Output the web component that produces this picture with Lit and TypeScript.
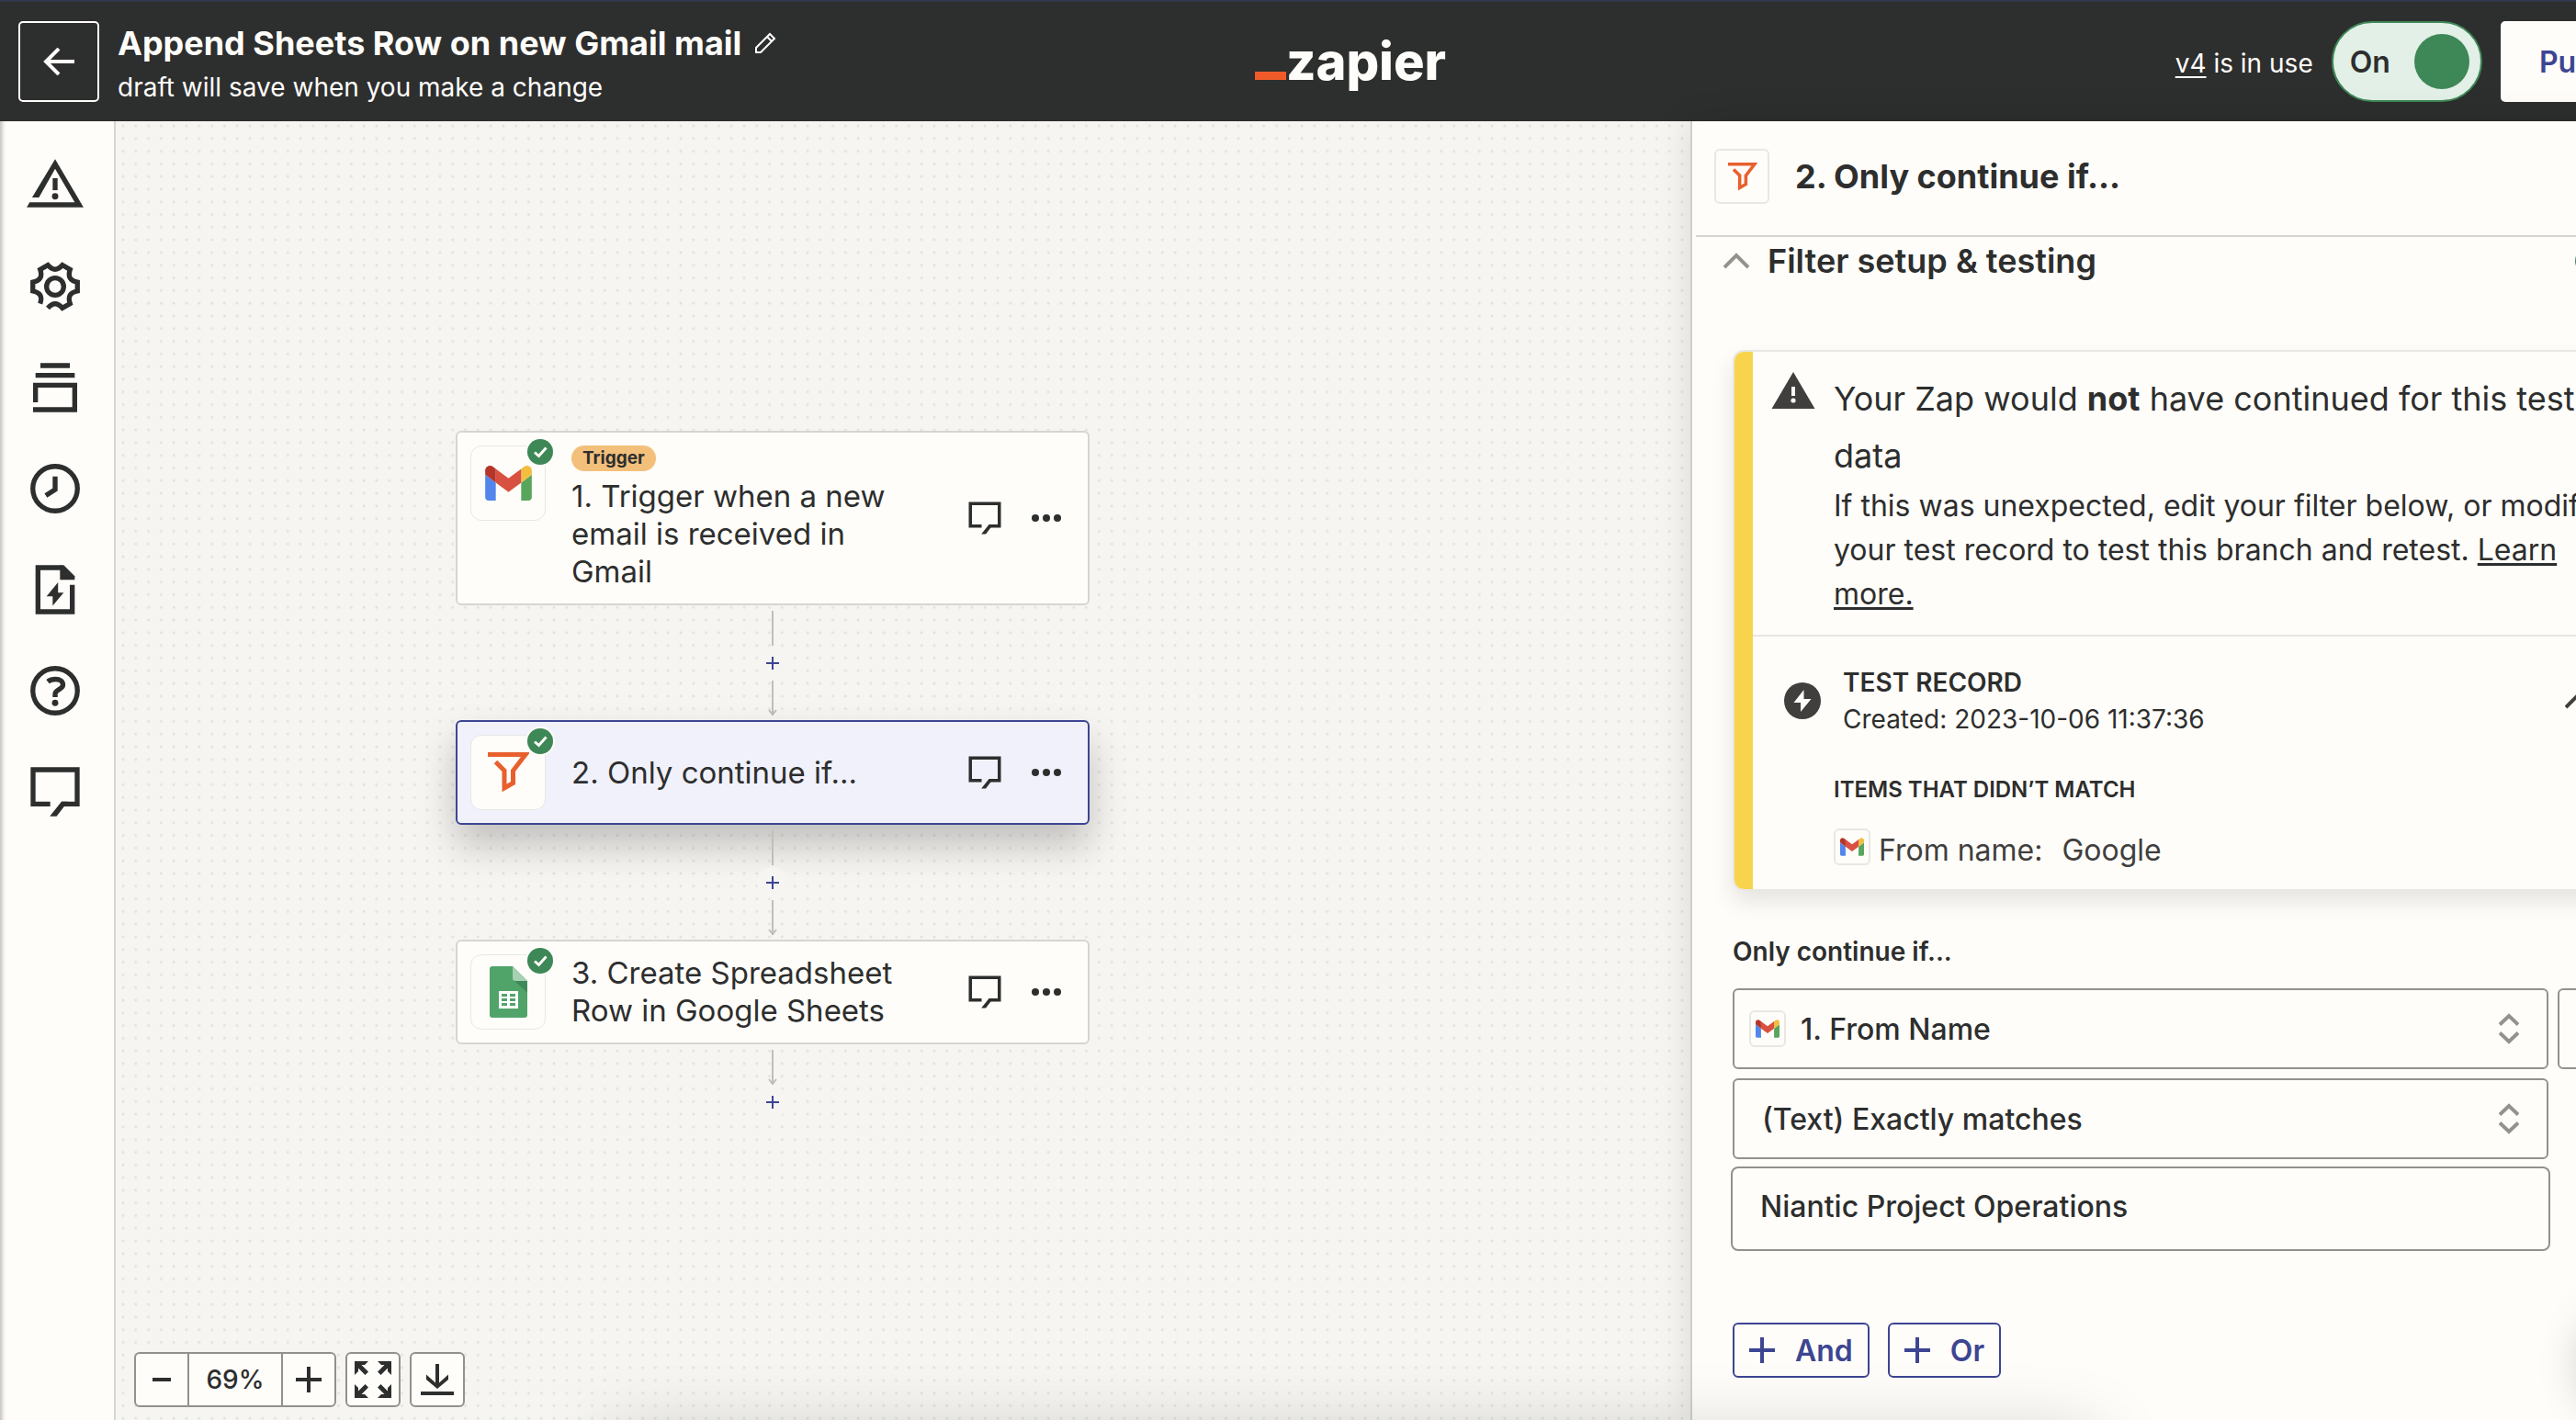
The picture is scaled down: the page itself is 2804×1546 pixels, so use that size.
import { LitElement, html, css, svg, nothing } from "lit";
import { customElement, property } from "lit/decorators.js";

/* ---------- icons ---------- */

const funnelIcon = html`<svg class="funnel" viewBox="0 0 46 44" fill="none" stroke="#e8602e" stroke-width="5" aria-hidden="true">
  <path d="M1 2.500H42L28.500 20V33.500L19 39V20L9.500 10.500" />
</svg>`;

const gmailIcon = html`<svg class="gmail" viewBox="52 42 88 66" aria-hidden="true">
  <path fill="#5386ec" d="M58 108h14V74L52 59v43c0 3.32 2.69 6 6 6" />
  <path fill="#58a55c" d="M120 108h14c3.32 0 6-2.69 6-6V59l-20 15" />
  <path fill="#f2be42" d="M120 48v26l20-15v-8c0-7.42-8.47-11.65-14.4-7.2" />
  <path fill="#d8503f" d="M72 74V48l24 18 24-18v26L96 92" />
  <path fill="#b5352a" d="M52 51v8l20 15V48l-5.6-4.2c-5.94-4.45-14.4-.22-14.4 7.2" />
</svg>`;

const sheetsIcon = html`<svg class="sheets" viewBox="0 0 41 56" aria-hidden="true">
  <path fill="#50a46a" d="M3 0H25L41 16V53a3 3 0 0 1-3 3H3a3 3 0 0 1-3-3V3a3 3 0 0 1 3-3z" />
  <path fill="#3f8a58" d="M26 15L41 29V16z" />
  <path fill="#a6d1b3" d="M25 0L41 16H28a3 3 0 0 1-3-3z" />
  <path fill="#fff" d="M10 27H31V46H10z" />
  <path fill="#50a46a" d="M13 30h6v3h-6zM22 30h6v3h-6zM13 35h6v3h-6zM22 35h6v3h-6zM13 40h6v3h-6zM22 40h6v3h-6z" />
</svg>`;

const checkIcon = html`<svg viewBox="0 0 28 28" width="28" height="28" aria-hidden="true">
  <circle cx="14" cy="14" r="14" fill="#3e8756" />
  <path d="M8 14.5L12.5 18.5L20.5 9.5" fill="none" stroke="#fffdf9" stroke-width="3" />
</svg>`;

/* Six-toothed gear outline, left open at the lower-left tooth. */
const gearPath = (() => {
  const at = (deg: number, r: number, w: number) => {
    const a = (deg * Math.PI) / 180;
    const x = 12 + r * Math.cos(a) - w * Math.sin(a);
    const y = 12 + r * Math.sin(a) + w * Math.cos(a);
    return `${x.toFixed(2)} ${y.toFixed(2)}`;
  };
  let d = `M${at(120, 9.1, 1.8)}`;
  for (let i = 1; i <= 6; i++) {
    const deg = 120 + i * 60;
    d += `Q${at(deg - 30, 5.3, 0)} ${at(deg, 9.1, -1.8)}`;
    if (i < 6) d += `L${at(deg, 9.1, 1.8)}`;
  }
  return d;
})();

const chatShape = svg`<path d="M10 17H3V3H21V17H14.6" /><path class="solid" d="M14.6 16H17.2L12.6 22H9.8z" />`;

const railIcons = [
  {
    name: "Zap status",
    shape: svg`<path class="solid" d="M12 1.2L23.6 20.9H.4L1.6 18.8H20L12 5.2L5.4 16.9H2.6z" /><path d="M12 9V13.9" /><circle class="solid" cx="12" cy="16.4" r="1.3" />`,
  },
  { name: "Settings", shape: svg`<path d=${gearPath} /><circle cx="12" cy="12" r="3.5" />` },
  { name: "Versions", shape: svg`<path d="M6 3H18M4 7H20M4 18V11H20V21H3" />` },
  { name: "History", shape: svg`<circle cx="12" cy="12" r="9.1" /><path d="M12 7V12.4L8.2 14.8" />` },
  {
    name: "Zap runs",
    shape: svg`<path d="M19 10V21H5V3H14.5" /><path class="solid" d="M14 2H15.5L20 6.5V8H14z" /><path class="solid" d="M13.2 9L8.5 14.7H11V18.6L15.5 13.2H13.2z" />`,
  },
  {
    name: "Help",
    shape: svg`<circle cx="12" cy="12" r="9.1" /><path d="M9 8.3C10 7.5 11 7.3 12.2 7.3C14 7.3 15.2 8.2 15.2 9.6C15.2 11.6 12 11.4 12 13.4V14.6" /><circle class="solid" cx="12" cy="17" r="1.3" />`,
  },
  { name: "Comments", shape: chatShape },
];

/* ---------- shared styles ---------- */

const base = css`
  * {
    box-sizing: border-box;
  }
  :host {
    font-family: Inter, "Liberation Sans", sans-serif;
    color: #2d2e2e;
  }
  button,
  select,
  input {
    font: inherit;
    color: inherit;
    margin: 0;
    padding: 0;
    border: 0;
    background: none;
  }
  button {
    cursor: pointer;
  }
  h1,
  h2,
  h3,
  h4,
  p {
    margin: 0;
  }
  svg {
    display: block;
    flex: none;
  }
  .line {
    fill: none;
    stroke: currentColor;
    stroke-width: 2;
  }
  .line .solid {
    fill: currentColor;
    stroke: none;
  }
`;

/* ---------- top bar ---------- */

@customElement("zap-header")
class ZapHeader extends LitElement {
  static styles = [
    base,
    css`
      :host {
        display: grid;
        grid-template-columns: 1fr auto 1fr;
        align-items: center;
        height: 132px;
        padding: 0 20px;
        border-top: 2px solid #31364a;
        background: #2d2e2e;
        color: #fffdf9;
      }
      .start,
      .end,
      .title-row,
      .toggle {
        display: flex;
        align-items: center;
      }
      .start {
        gap: 20px;
      }
      .end {
        justify-content: flex-end;
        gap: 20px;
      }
      .back {
        display: grid;
        place-items: center;
        width: 88px;
        height: 88px;
        border: 2px solid #fffdf9;
        border-radius: 5px;
      }
      .names {
        display: grid;
        gap: 8px;
        padding-top: 4px;
      }
      .title-row {
        gap: 14px;
      }
      h1 {
        font-size: 36px;
        line-height: 44px;
        font-weight: 700;
      }
      .note {
        font-size: 28px;
        line-height: 36px;
      }
      .logo {
        display: flex;
        align-items: baseline;
        font-size: 56px;
        line-height: 56px;
        font-weight: 800;
        color: #fffdf9;
        text-decoration: none;
      }
      .bar {
        width: 34px;
        height: 9px;
        background: #f05a28;
      }
      .version {
        font-size: 28px;
        line-height: 36px;
        padding-top: 4px;
      }
      .version a {
        color: inherit;
        text-decoration-thickness: 2px;
        text-underline-offset: 4px;
      }
      .toggle {
        justify-content: space-between;
        gap: 26px;
        height: 88px;
        padding: 0 12px 0 18px;
        border: 2px solid #3e8756;
        border-radius: 44px;
        background: #e2f0e8;
        color: #2d2e2e;
        font-size: 32px;
        font-weight: 600;
      }
      .toggle input {
        appearance: none;
        width: 60px;
        height: 60px;
        border-radius: 50%;
        background: #3e8756;
      }
      .publish {
        height: 88px;
        padding: 0 42px;
        border-radius: 5px;
        background: #fffdf9;
        color: #3d4592;
        font-size: 32px;
        font-weight: 600;
      }
    `,
  ];

  render() {
    return html`
      <div class="start">
        <button class="back" aria-label="Back">
          <svg width="34" height="30" viewBox="0 0 34 30" fill="none" stroke="currentColor" stroke-width="4" aria-hidden="true">
            <path d="M34 15H3M17 1L3 15L17 29" />
          </svg>
        </button>
        <div class="names">
          <div class="title-row">
            <h1>Append Sheets Row on new Gmail mail</h1>
            <button aria-label="Rename">
              <svg width="24" height="24" viewBox="0 0 24 24" fill="none" stroke="currentColor" stroke-width="2" aria-hidden="true">
                <path d="M2 22V17L17 2L22 7L7 22zM14 5L19 10" />
              </svg>
            </button>
          </div>
          <p class="note">draft will save when you make a change</p>
        </div>
      </div>
      <a class="logo" href="#"><span class="bar"></span>zapier</a>
      <div class="end">
        <p class="version"><a href="#">v4</a> is in use</p>
        <label class="toggle">On<input type="checkbox" role="switch" checked /></label>
        <button class="publish">Publish</button>
      </div>
    `;
  }
}

/* ---------- left rail ---------- */

@customElement("zap-rail")
class ZapRail extends LitElement {
  static styles = [
    base,
    css`
      :host {
        display: block;
        flex: none;
        padding: 38px 32px 38px 28px;
        border-right: 2px solid #d7d5d2;
        background: #fffdf9;
        box-shadow: inset 6px 0 5px -4px #b9b7b3;
      }
      nav {
        display: grid;
        gap: 46px;
      }
    `,
  ];

  render() {
    return html`<nav>
      ${railIcons.map(
        (icon) => html`<button aria-label=${icon.name}>
          <svg class="line" width="64" height="64" viewBox="0 0 24 24" aria-hidden="true">${icon.shape}</svg>
        </button>`
      )}
    </nav>`;
  }
}

/* ---------- flow canvas ---------- */

interface Step {
  title: string;
  icon: unknown;
  trigger?: boolean;
  selected?: boolean;
}

const steps: Step[] = [
  { title: "1. Trigger when a new email is received in Gmail", icon: gmailIcon, trigger: true },
  { title: "2. Only continue if...", icon: funnelIcon, selected: true },
  { title: "3. Create Spreadsheet Row in Google Sheets", icon: sheetsIcon },
];

@customElement("zap-step")
class ZapStep extends LitElement {
  @property({ attribute: false }) step!: Step;

  static styles = [
    base,
    css`
      :host {
        display: block;
      }
      .card {
        display: flex;
        align-items: center;
        padding: 14px 28px 14px 14px;
        border: 2px solid #d7d5d2;
        border-radius: 6px;
        background: #fffdf9;
      }
      .selected {
        border-color: #3d4592;
        background: #f0f1fa;
        box-shadow: 0 22px 40px rgba(0, 0, 0, 0.22);
      }
      .app {
        position: relative;
        display: grid;
        place-items: center;
        align-self: flex-start;
        flex: none;
        width: 82px;
        height: 82px;
        border: 1px solid #e8e7e4;
        border-radius: 12px;
        background: #fffdf9;
      }
      .check {
        position: absolute;
        top: -8px;
        right: -9px;
        border-radius: 50%;
        box-shadow: 0 0 0 2px #fffdf9;
      }
      .gmail {
        width: 51px;
        height: 38px;
      }
      .funnel {
        width: 46px;
        height: 44px;
      }
      .sheets {
        width: 41px;
        height: 56px;
      }
      .text {
        flex: 1;
        padding: 0 60px 0 28px;
      }
      .tag {
        display: block;
        width: fit-content;
        margin-bottom: 7px;
        padding: 0 12px;
        border-radius: 14px;
        background: #f3c07b;
        font-size: 19px;
        line-height: 28px;
        font-weight: 700;
      }
      h3 {
        font-size: 33px;
        line-height: 41px;
        font-weight: 400;
      }
      .actions {
        display: flex;
        align-items: center;
        gap: 29px;
      }
    `,
  ];

  render() {
    const { title, icon, trigger, selected } = this.step;
    return html`<article class="card ${selected ? "selected" : ""}">
      <div class="app">
        ${icon}
        <span class="check">${checkIcon}</span>
      </div>
      <div class="text">
        ${trigger ? html`<span class="tag">Trigger</span>` : nothing}
        <h3>${title}</h3>
      </div>
      <div class="actions">
        <button aria-label="Comment">
          <svg class="line" width="42" height="42" viewBox="0 0 24 24" aria-hidden="true">${chatShape}</svg>
        </button>
        <button aria-label="More">
          <svg width="34" height="10" viewBox="0 0 34 10" fill="currentColor" aria-hidden="true">
            <circle cx="5" cy="5" r="4" /><circle cx="17" cy="5" r="4" /><circle cx="29" cy="5" r="4" />
          </svg>
        </button>
      </div>
    </article>`;
  }
}

@customElement("zap-canvas")
class ZapCanvas extends LitElement {
  static styles = [
    base,
    css`
      :host {
        --zoom: 0.69;
        position: relative;
        display: block;
        flex: 1;
        min-width: 0;
        padding: 337px 0 0 370px;
        background: #f6f5f2 radial-gradient(circle at 8px 5px, #e4e2de 1px, transparent 2px);
        background-size: calc(20px * var(--zoom)) calc(20px * var(--zoom));
      }
      .flow {
        display: grid;
        width: 690px;
      }
      .link {
        display: flex;
        flex-direction: column;
        align-items: center;
        gap: 2px;
        padding: 6px 0 5px;
        color: #c0beba;
      }
      .add {
        display: grid;
        place-items: center;
        width: 34px;
        height: 34px;
        border-radius: 50%;
        background: #f6f5f2;
        color: #3d4592;
      }
      .controls {
        position: absolute;
        left: 20px;
        bottom: 14px;
        display: flex;
        gap: 10px;
      }
      .group,
      .tool {
        display: flex;
        height: 60px;
        border: 2px solid #93918c;
        border-radius: 6px;
        background: #fffdf9;
      }
      .tool {
        width: 60px;
      }
      .tool,
      .step {
        align-items: center;
        justify-content: center;
      }
      .step {
        display: flex;
        width: 56px;
      }
      .level {
        width: 104px;
        border: solid #93918c;
        border-width: 0 2px;
        font-size: 28px;
        line-height: 56px;
        font-weight: 500;
        text-align: center;
      }
    `,
  ];

  private line(arrow: boolean) {
    return html`<svg width="12" height="38" viewBox="0 0 12 38" fill="none" stroke="currentColor" stroke-width="2" aria-hidden="true">
      <path d="M6 0V38" />${arrow ? svg`<path d="M2 32L6 37L10 32" />` : nothing}
    </svg>`;
  }

  private add() {
    return html`<button class="add" aria-label="Add step">
      <svg width="14" height="14" viewBox="0 0 14 14" stroke="currentColor" stroke-width="2" aria-hidden="true"><path d="M7 0V14M0 7H14" /></svg>
    </button>`;
  }

  render() {
    return html`
      <div class="flow">
        ${steps.map(
          (step, i) => html`<zap-step .step=${step}></zap-step>
            <div class="link">
              ${i < steps.length - 1
                ? html`${this.line(false)}${this.add()}${this.line(true)}`
                : html`${this.line(true)}${this.add()}`}
            </div>`
        )}
      </div>
      <div class="controls">
        <div class="group">
          <button class="step" aria-label="Zoom out">
            <svg width="28" height="28" viewBox="0 0 28 28" stroke="currentColor" stroke-width="4" aria-hidden="true"><path d="M4 14H24" /></svg>
          </button>
          <output class="level">69%</output>
          <button class="step" aria-label="Zoom in">
            <svg width="28" height="28" viewBox="0 0 28 28" stroke="currentColor" stroke-width="4" aria-hidden="true"><path d="M14 0V28M0 14H28" /></svg>
          </button>
        </div>
        <button class="tool" aria-label="Fit to screen">
          <svg width="40" height="40" viewBox="0 0 40 40" fill="currentColor" aria-hidden="true">
            ${[0, 90, 180, 270].map(
              (turn) => svg`<path transform="rotate(${turn} 20 20)" d="M0 0H15L11 4H7.5L15 11.5L11.5 15L4 7.5V11L0 15z" />`
            )}
          </svg>
        </button>
        <button class="tool" aria-label="Download">
          <svg width="36" height="34" viewBox="0 0 36 34" fill="currentColor" aria-hidden="true">
            <path d="M16 0H20V20.5L30 11.5V17L18 27L6 17V11.5L16 20.5zM0 30H36V34H0z" />
          </svg>
        </button>
      </div>
    `;
  }
}

/* ---------- step panel ---------- */

@customElement("zap-panel")
class ZapPanel extends LitElement {
  static styles = [
    base,
    css`
      :host {
        position: relative;
        display: block;
        flex: 0 0 1100px;
        border-left: 2px solid #d0cfca;
        background: #fffdf9;
        box-shadow: 0 0 36px rgba(0, 0, 0, 0.12);
      }
      .top {
        display: flex;
        align-items: center;
        gap: 28px;
        margin-left: 4px;
        padding: 30px 20px 34px;
        border-bottom: 2px solid #d7d5d2;
      }
      h2 {
        font-size: 36px;
        line-height: 44px;
        font-weight: 700;
      }
      .app {
        display: grid;
        place-items: center;
        flex: none;
        width: 60px;
        height: 60px;
        border: 2px solid #e8e7e4;
        border-radius: 6px;
      }
      .app .funnel {
        width: 33px;
        height: 31px;
      }
      .app.small {
        width: 40px;
        height: 40px;
      }
      .gmail {
        width: 26px;
        height: 20px;
      }
      .section {
        display: flex;
        align-items: center;
        gap: 20px;
        padding: 4px 109px 0 34px;
      }
      .section h3 {
        flex: 1;
        font-size: 36px;
        line-height: 44px;
        font-weight: 600;
      }
      .chevron {
        color: #95928e;
      }
      .content {
        padding: 75px 44px 40px;
      }
      .alert {
        display: flex;
        overflow: hidden;
        border: 2px solid #e8e7e4;
        border-radius: 12px;
        box-shadow: 0 12px 24px rgba(0, 0, 0, 0.1);
      }
      .stripe {
        flex: none;
        width: 20px;
        background: #f7d44c;
      }
      .body {
        flex: 1;
      }
      .message {
        display: flex;
        gap: 20px;
        padding: 20px 40px 20px 20px;
        border-bottom: 2px solid #e8e7e4;
      }
      .warning {
        margin-top: 2px;
        color: #403f3e;
      }
      .headline {
        font-size: 36px;
        line-height: 62px;
        font-weight: 400;
      }
      .copy {
        font-size: 32px;
        line-height: 48px;
      }
      .copy a {
        color: inherit;
        text-decoration-thickness: 3px;
        text-underline-offset: 3px;
      }
      .record {
        display: flex;
        align-items: center;
        gap: 24px;
        padding: 30px 74px 0 34px;
        font-size: 28px;
        line-height: 40px;
        color: #2d2e2e;
      }
      .record div {
        flex: 1;
      }
      .record h4 {
        font-size: 28px;
        font-weight: 600;
      }
      .items {
        display: grid;
        gap: 26px;
        padding: 41px 40px 18px 88px;
      }
      .items h4 {
        font-size: 24px;
        line-height: 32px;
        font-weight: 600;
      }
      .item {
        display: flex;
        gap: 9px;
        font-size: 32px;
        line-height: 48px;
        color: #403f3e;
      }
      .item .value {
        margin-left: 12px;
      }
      .label {
        margin: 46px 0 20px;
        font-size: 28px;
        line-height: 40px;
        font-weight: 600;
      }
      .rule {
        display: grid;
        grid-template-columns: minmax(0, 1fr) 112px;
        gap: 10px;
      }
      .field,
      .remove {
        height: 88px;
        border: 2px solid #93918c;
        border-radius: 6px;
      }
      .remove {
        display: grid;
        place-items: center;
        color: #3d4592;
      }
      .field {
        display: flex;
        align-items: center;
        gap: 16px;
        padding: 0 30px 0 16px;
        font-size: 32px;
        font-weight: 500;
      }
      .field select {
        flex: 1;
        height: 84px;
        appearance: none;
      }
      .field.plain {
        padding-left: 30px;
      }
      .text {
        grid-column: 1;
        width: calc(100% + 4px);
        height: 92px;
        margin: -2px;
        margin-bottom: 0;
        padding: 0 30px 6px;
        border: 2px solid #93918c;
        border-radius: 8px;
        font-size: 32px;
        font-weight: 500;
      }
      .buttons {
        display: flex;
        gap: 20px;
        margin-top: 78px;
      }
      .buttons button {
        display: flex;
        align-items: center;
        gap: 22px;
        height: 60px;
        padding: 0 16px;
        border: 2px solid #3d4592;
        border-radius: 6px;
        color: #3d4592;
        font-size: 32px;
        font-weight: 600;
      }
      button .chevron {
        color: #403f3e;
      }
    `,
  ];

  private chevronUp() {
    return html`<svg class="chevron" width="28" height="18" viewBox="0 0 28 18" fill="none" stroke="currentColor" stroke-width="4" aria-hidden="true">
      <path d="M1 16L14 3L27 16" />
    </svg>`;
  }

  private sorter() {
    return html`<svg class="chevron" width="22" height="34" viewBox="0 0 22 34" fill="none" stroke="currentColor" stroke-width="4" aria-hidden="true">
      <path d="M1 12.5L11 3L21 12.5M1 21.5L11 31L21 21.5" />
    </svg>`;
  }

  private plus() {
    return html`<svg width="28" height="28" viewBox="0 0 28 28" stroke="currentColor" stroke-width="4" aria-hidden="true"><path d="M14 0V28M0 14H28" /></svg>`;
  }

  render() {
    return html`
      <div class="top">
        <span class="app">${funnelIcon}</span>
        <h2>2. Only continue if...</h2>
      </div>
      <div class="section">
        ${this.chevronUp()}
        <h3>Filter setup &amp; testing</h3>
        ${checkIcon}
      </div>
      <div class="content">
        <div class="alert">
          <span class="stripe"></span>
          <div class="body">
            <div class="message">
              <svg class="warning" width="48" height="40" viewBox="0 0 48 40" fill="currentColor" aria-hidden="true">
                <path d="M24 0L47.500 40H.5z" />
                <path d="M24 16V26" stroke="#fffdf9" stroke-width="4" />
                <circle cx="24" cy="31" r="2.600" fill="#fffdf9" />
              </svg>
              <div>
                <h3 class="headline">Your Zap would <b>not</b> have continued for this test data</h3>
                <p class="copy">
                  If this was unexpected, edit your filter below, or modify your test record to test this branch and retest.
                  <a href="#">Learn more.</a>
                </p>
              </div>
            </div>
            <div class="record">
              <svg width="40" height="40" viewBox="0 0 40 40" aria-hidden="true">
                <circle cx="20" cy="20" r="20" fill="#403f3e" />
                <path d="M21.500 8L10.500 22H18V32L29.500 18H21.500z" fill="#fffdf9" />
              </svg>
              <div>
                <h4>TEST RECORD</h4>
                <p>Created: 2023-10-06 11:37:36</p>
              </div>
              <button aria-label="Collapse">${this.chevronUp()}</button>
            </div>
            <div class="items">
              <h4>ITEMS THAT DIDN’T MATCH</h4>
              <div class="item">
                <span class="app small">${gmailIcon}</span>
                <span>From name:</span>
                <span class="value">Google</span>
              </div>
            </div>
          </div>
        </div>
        <p class="label" id="rule-label">Only continue if...</p>
        <div class="rule" role="group" aria-labelledby="rule-label">
          <label class="field">
            <span class="app small">${gmailIcon}</span>
            <select aria-label="Field">
              <option>1. From Name</option>
            </select>
            ${this.sorter()}
          </label>
          <button class="remove" aria-label="Remove rule"></button>
          <label class="field plain">
            <select aria-label="Condition">
              <option>(Text) Exactly matches</option>
            </select>
            ${this.sorter()}
          </label>
          <input class="text" type="text" aria-label="Value" value="Niantic Project Operations" />
        </div>
        <div class="buttons">
          <button>${this.plus()}And</button>
          <button>${this.plus()}Or</button>
        </div>
      </div>
    `;
  }
}

/* ---------- app ---------- */

@customElement("app-root")
class AppRoot extends LitElement {
  static styles = [
    base,
    css`
      :host {
        position: relative;
        display: block;
        min-height: 100vh;
        overflow: hidden;
      }
      .page {
        display: flex;
        flex-direction: column;
        width: calc(100% + 136px);
        min-height: 100vh;
      }
      .main {
        display: flex;
        flex: 1;
      }
      .tray,
      .bubble {
        position: absolute;
        pointer-events: none;
      }
      .tray {
        left: 660px;
        right: 524px;
        bottom: -80px;
        height: 60px;
        box-shadow: 0 0 80px rgba(0, 0, 0, 0.22);
      }
      .bubble {
        right: -120px;
        bottom: 4px;
        width: 112px;
        height: 112px;
        border-radius: 50%;
        box-shadow: 0 0 50px rgba(0, 0, 0, 0.24);
      }
    `,
  ];

  render() {
    return html`
      <div class="page">
        <zap-header></zap-header>
        <div class="main">
          <zap-rail></zap-rail>
          <zap-canvas></zap-canvas>
          <zap-panel></zap-panel>
        </div>
      </div>
      <div class="tray"></div>
      <div class="bubble"></div>
    `;
  }
}
